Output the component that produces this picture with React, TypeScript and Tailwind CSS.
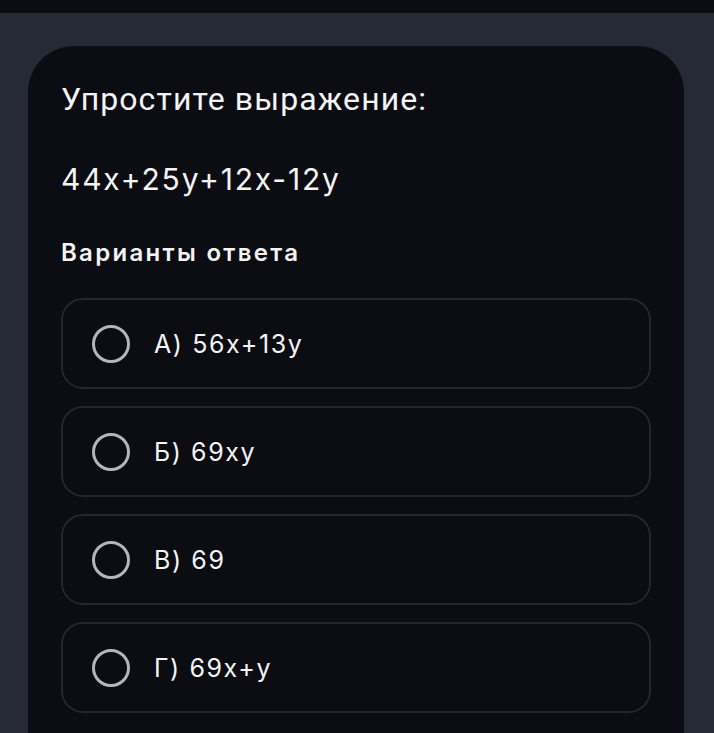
import React from "react";

const options = ["А) 56x+13y", "Б) 69xy", "В) 69", "Г) 69x+y"];

export default function App() {
  return (
    <div className="min-h-[733px] overflow-hidden bg-[#262a35] font-['Inter',sans-serif] text-[#f4f4f5]">
      <div className="h-[13px] bg-[#0b0d12]" />
      <div className="pl-[28px] pr-[30px] pt-[33px]">
        <div className="h-[720px] rounded-t-[46px] bg-[#0b0d12] px-[33px] pt-[33px]">
          <h1 className="font-['Roboto',sans-serif] text-[32px] leading-[40px] font-normal tracking-[1.1px]">
            Упростите выражение:
          </h1>
          <p className="mt-[42px] text-[30px] leading-[36px] tracking-[1.8px]">44x+25y+12x-12y</p>
          <h2 className="mt-[41px] text-[24px] leading-[30px] font-semibold tracking-[2.3px]">Варианты ответа</h2>
          <div className="mt-[30px] flex flex-col gap-[17px]">
            {options.map((o) => (
              <button
                key={o}
                className="flex h-[91px] items-center gap-[24px] rounded-[22px] border-2 border-[#23262e] pl-[29px] text-left"
              >
                <span className="h-[38px] w-[38px] shrink-0 rounded-full border-[3px] border-[#b4b5ba]" />
                <span className="text-[25px] leading-[30px] tracking-[1.6px]">{o}</span>
              </button>
            ))}
          </div>
        </div>
      </div>
    </div>
  );
}
